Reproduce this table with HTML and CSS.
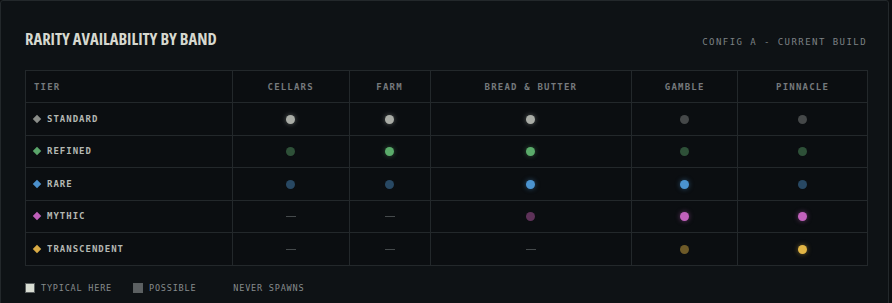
FILE: index.html
```html
<!DOCTYPE html>
<html>
<head>
<meta charset="utf-8">
<link rel="stylesheet" href="styles.css">
</head>
<body>
<div class="panel">
  <div class="head">
    <h1 class="title">RARITY AVAILABILITY BY BAND</h1>
    <div class="config">CONFIG A - CURRENT BUILD</div>
  </div>
  <table class="grid">
    <colgroup>
      <col class="c-tier"><col class="c-cellars"><col class="c-farm"><col class="c-bread"><col class="c-gamble"><col class="c-pinnacle">
    </colgroup>
    <thead>
      <tr><th class="tier-h">TIER</th><th>CELLARS</th><th>FARM</th><th>BREAD &amp; BUTTER</th><th>GAMBLE</th><th>PINNACLE</th></tr>
    </thead>
    <tbody>
      <tr class="standard">
        <td class="tier"><span class="gem"></span>STANDARD</td>
        <td><span class="dot on"></span></td><td><span class="dot on"></span></td><td><span class="dot on"></span></td><td><span class="dot"></span></td><td><span class="dot"></span></td>
      </tr>
      <tr class="refined">
        <td class="tier"><span class="gem"></span>REFINED</td>
        <td><span class="dot"></span></td><td><span class="dot on"></span></td><td><span class="dot on"></span></td><td><span class="dot"></span></td><td><span class="dot"></span></td>
      </tr>
      <tr class="rare">
        <td class="tier"><span class="gem"></span>RARE</td>
        <td><span class="dot"></span></td><td><span class="dot"></span></td><td><span class="dot on"></span></td><td><span class="dot on"></span></td><td><span class="dot"></span></td>
      </tr>
      <tr class="mythic">
        <td class="tier"><span class="gem"></span>MYTHIC</td>
        <td><span class="dash"></span></td><td><span class="dash"></span></td><td><span class="dot"></span></td><td><span class="dot on"></span></td><td><span class="dot on"></span></td>
      </tr>
      <tr class="trans">
        <td class="tier"><span class="gem"></span>TRANSCENDENT</td>
        <td><span class="dash"></span></td><td><span class="dash"></span></td><td><span class="dash"></span></td><td><span class="dot"></span></td><td><span class="dot on"></span></td>
      </tr>
    </tbody>
  </table>
  <div class="legend">
    <span class="key"><span class="sq typical"></span>TYPICAL HERE</span>
    <span class="key"><span class="sq possible"></span>POSSIBLE</span>
    <span class="key"><span class="ldash"></span>NEVER SPAWNS</span>
  </div>
</div>
</body>
</html>
```
FILE: styles.css
```css
html, body {
  margin: 0;
  padding: 0;
  background: #0b0e10;
  overflow: hidden;
}
.panel {
  width: 889px;
  height: 320px;
  box-sizing: border-box;
  background: #0e1215;
  border: 1px solid #23282b;
  border-radius: 3px;
  padding: 29px 22px 0 24px;
}
.head {
  display: flex;
  justify-content: space-between;
  align-items: baseline;
  height: 40px;
}
.title {
  margin: 0;
  font-family: "Open Sans", "DejaVu Sans Condensed", sans-serif;
  font-stretch: 75%;
  font-weight: bold;
  font-size: 16.5px;
  letter-spacing: 0;
  color: #d6d8cf;
  line-height: 18px;
}
.config {
  font-family: "DejaVu Sans Mono", monospace;
  font-size: 9px;
  letter-spacing: 1.45px;
  color: #7c8184;
  margin-right: -1px;
}
.grid {
  width: 843px;
  border-collapse: collapse;
  background: #0b0e11;
  font-family: "DejaVu Sans Mono", monospace;
  font-size: 9px;
  letter-spacing: 1.2px;
}
.c-tier { width: 207px; }
.c-cellars { width: 117px; }
.c-farm { width: 81px; }
.c-bread { width: 202px; }
.c-gamble { width: 106px; }
.c-pinnacle { width: 130px; }
.grid th, .grid td {
  border: 1px solid #23282b;
  padding: 0;
  text-align: center;
  vertical-align: middle;
}
.grid th {
  height: 31px;
  font-weight: bold;
  color: #75797c;
}
.grid td {
  height: 31.5px;
}
.grid th.tier-h, .grid td.tier {
  text-align: left;
  padding-left: 8px;
}
.grid td.tier {
  color: #b4b8b3;
  font-weight: bold;
  letter-spacing: 1px;
}
.gem {
  display: inline-block;
  width: 6px;
  height: 6px;
  transform: rotate(45deg);
  margin: 0 7px 0 0;
  vertical-align: 0px;
}
.dot {
  display: inline-block;
  width: 9px;
  height: 9px;
  border-radius: 50%;
  vertical-align: middle;
}
.dash {
  display: inline-block;
  width: 10px;
  height: 1px;
  background: #454a4c;
  vertical-align: middle;
}
.standard .gem { background: #8a8d89; }
.standard .dot { background: #454849; }
.standard .dot.on { background: #a9aca6; box-shadow: 0 0 5px rgba(190,195,190,0.45); }
.refined .gem { background: #5aa56a; }
.refined .dot { background: #2e5038; }
.refined .dot.on { background: #5aab6a; box-shadow: 0 0 5px rgba(90,171,106,0.45); }
.rare .gem { background: #4b90cc; }
.rare .dot { background: #284863; }
.rare .dot.on { background: #4b93cf; box-shadow: 0 0 5px rgba(75,147,207,0.5); }
.mythic .gem { background: #be5fba; }
.mythic .dot { background: #5e3259; }
.mythic .dot.on { background: #c262bc; box-shadow: 0 0 5px rgba(194,98,188,0.5); }
.trans .gem { background: #d9ab45; }
.trans .dot { background: #6e5a28; }
.trans .dot.on { background: #e2b545; box-shadow: 0 0 5px rgba(226,181,69,0.5); }
.legend {
  display: flex;
  margin-top: 17px;
  font-family: "DejaVu Sans Mono", monospace;
  font-size: 8.5px;
  letter-spacing: 0.8px;
  color: #868b8c;
  align-items: center;
}
.key {
  display: flex;
  align-items: center;
  gap: 6px;
  margin-right: 21px;
}
.sq {
  width: 8px;
  height: 8px;
  border: 1px solid #5a5f60;
}
.sq.typical { background: #d9ddd3; }
.sq.possible { background: #5c6062; }
.ldash {
  width: 10px;
  height: 1px;
  background: transparent;
}
```
